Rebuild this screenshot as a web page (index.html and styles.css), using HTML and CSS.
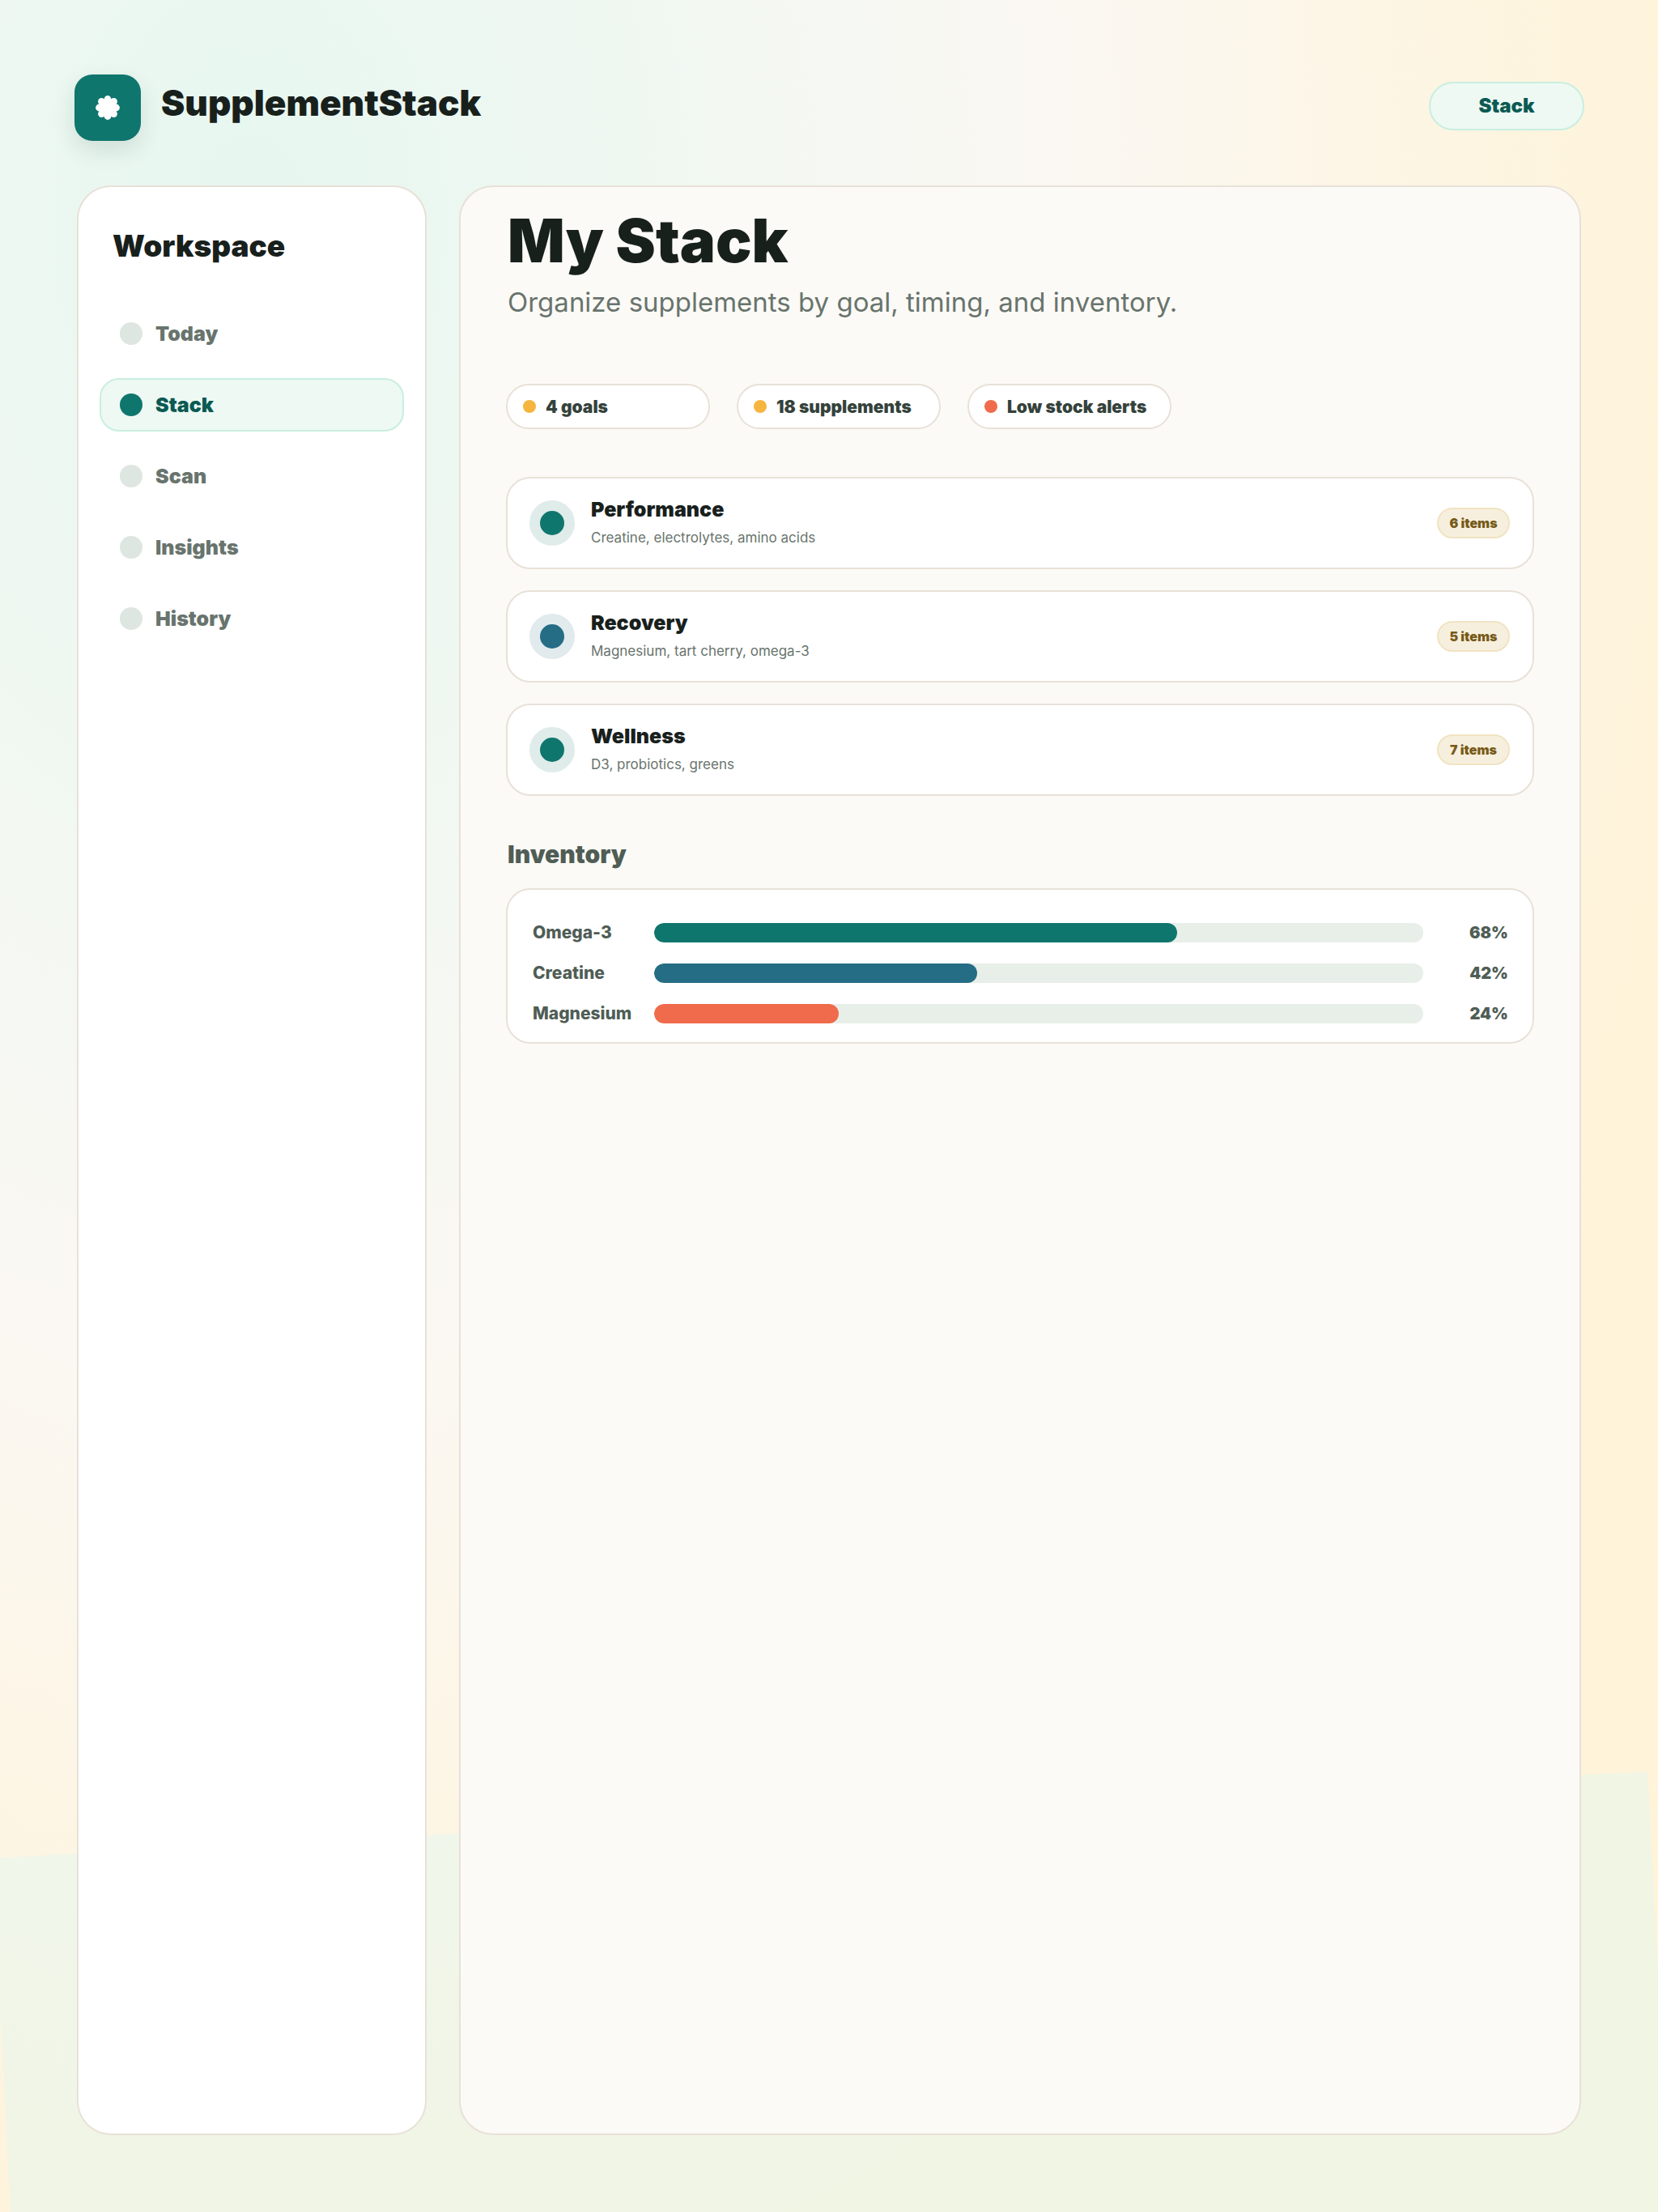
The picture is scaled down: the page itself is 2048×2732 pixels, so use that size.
FILE: index.html
```html
<!DOCTYPE html>
<html lang="en">
<head>
<meta charset="utf-8">
<meta name="viewport" content="width=device-width, initial-scale=1">
<title>SupplementStack – My Stack</title>
<link rel="stylesheet" href="styles.css">
</head>
<body>
<div class="app">
  <header class="topbar">
    <span class="logo">
      <svg viewBox="0 0 32 32" width="32" height="32" fill="#fff" aria-hidden="true">
        <circle cx="16" cy="16" r="11.5"/>
        <circle cx="16" cy="5.5" r="4.4"/><circle cx="16" cy="26.5" r="4.4"/>
        <circle cx="5.5" cy="16" r="4.4"/><circle cx="26.5" cy="16" r="4.4"/>
        <circle cx="8.4" cy="8.4" r="4.3"/><circle cx="23.6" cy="8.4" r="4.3"/>
        <circle cx="8.4" cy="23.6" r="4.3"/><circle cx="23.6" cy="23.6" r="4.3"/>
      </svg>
    </span>
    <span class="brand">SupplementStack</span>
    <button class="section-pill" type="button">Stack</button>
  </header>
  <div class="columns">
    <aside class="sidebar">
      <h2 class="sidebar-title">Workspace</h2>
      <nav class="nav">
        <a class="nav-item" href="#today"><span class="nav-dot"></span>Today</a>
        <a class="nav-item active" href="#stack" aria-current="page"><span class="nav-dot"></span>Stack</a>
        <a class="nav-item" href="#scan"><span class="nav-dot"></span>Scan</a>
        <a class="nav-item" href="#insights"><span class="nav-dot"></span>Insights</a>
        <a class="nav-item" href="#history"><span class="nav-dot"></span>History</a>
      </nav>
    </aside>
    <main class="content">
      <h1 class="title">My Stack</h1>
      <p class="subtitle">Organize supplements by goal, timing, and inventory.</p>
      <ul class="chips">
        <li class="chip"><span class="chip-dot"></span>4 goals</li>
        <li class="chip"><span class="chip-dot"></span>18 supplements</li>
        <li class="chip"><span class="chip-dot alert"></span>Low stock alerts</li>
      </ul>
      <ul class="goals">
        <li class="card goal">
          <span class="goal-icon teal"></span>
          <div class="goal-text"><h3 class="goal-name">Performance</h3><p class="goal-items">Creatine, electrolytes, amino acids</p></div>
          <span class="badge">6 items</span>
        </li>
        <li class="card goal">
          <span class="goal-icon blue"></span>
          <div class="goal-text"><h3 class="goal-name">Recovery</h3><p class="goal-items">Magnesium, tart cherry, omega-3</p></div>
          <span class="badge">5 items</span>
        </li>
        <li class="card goal">
          <span class="goal-icon teal"></span>
          <div class="goal-text"><h3 class="goal-name">Wellness</h3><p class="goal-items">D3, probiotics, greens</p></div>
          <span class="badge">7 items</span>
        </li>
      </ul>
      <h2 class="inventory-title">Inventory</h2>
      <ul class="card inventory">
        <li class="stock"><span class="stock-name">Omega-3</span><span class="track"><span class="fill teal" style="width:68%"></span></span><span class="percent">68%</span></li>
        <li class="stock"><span class="stock-name">Creatine</span><span class="track"><span class="fill blue" style="width:42%"></span></span><span class="percent">42%</span></li>
        <li class="stock"><span class="stock-name">Magnesium</span><span class="track"><span class="fill coral" style="width:24%"></span></span><span class="percent">24%</span></li>
      </ul>
    </main>
  </div>
</div>
</body>
</html>
```
FILE: styles.css
```css
:root {
  --ink: #18201c;
  --muted: #68746d;
  --slate: #4f5d55;
  --line: #e8e1d8;
  --teal: #0f766e;
  --teal-dark: #0b5a53;
  --blue: #256d85;
  --coral: #ef6b4c;
  --amber: #f5b53f;
  --mint: #eef9f4;
  --mint-line: #c9eee0;
}

* { box-sizing: border-box; }

body, h1, h2, h3, p, ul { margin: 0; padding: 0; }
ul { list-style: none; }

body {
  font-family: Inter, "Liberation Sans", sans-serif;
  color: var(--ink);
}

.app {
  position: relative;
  z-index: 0;
  overflow: hidden;
  min-height: 100vh;
  display: flex;
  flex-direction: column;
  padding: 92px 95px 95px;
  background: radial-gradient(ellipse farthest-corner at 15% 10%, #e6f7f0 0%, #fbf8f3 41%, #fdf5e2 60%, #fff3d9 76%);
}

/* Tilted mint band behind the lower part of the page */
.app::before {
  content: "";
  position: absolute;
  z-index: -1;
  left: -10px;
  top: 84%;
  width: 100%;
  height: 30%;
  background: rgba(219, 247, 245, 0.4);
  transform: rotate(-3deg);
  transform-origin: 0 0;
}

.topbar {
  display: flex;
  align-items: center;
  height: 82px;
  margin: 0 -4px 55px -3px;
}

.logo {
  display: grid;
  place-items: center;
  width: 82px;
  height: 82px;
  border-radius: 22px;
  background: var(--teal);
  box-shadow: 0 12px 28px rgba(24, 60, 40, 0.12);
}

.brand {
  margin-left: 25px;
  padding-bottom: 12px;
  font-size: 44px;
  line-height: 52px;
  font-weight: 900;
}

.section-pill {
  margin: 0 0 4px auto;
  width: 192px;
  height: 60px;
  border: 2px solid var(--mint-line);
  border-radius: 30px;
  background: var(--mint);
  color: var(--teal-dark);
  font: 900 24px/30px Inter, sans-serif;
}

.columns {
  flex: 1;
  display: grid;
  grid-template-columns: 432px 1fr;
  gap: 40px;
}

.sidebar, .content {
  border: 2px solid var(--line);
  border-radius: 42px;
}

.sidebar { background: #fff; padding: 49px 26px; }

.sidebar-title {
  padding-left: 16px;
  margin-bottom: 51px;
  font-size: 37px;
  line-height: 48px;
  font-weight: 900;
}

.nav { display: flex; flex-direction: column; gap: 22px; }

.nav-item {
  display: flex;
  align-items: center;
  gap: 16px;
  height: 66px;
  padding: 0 23px;
  border: 2px solid transparent;
  border-radius: 24px;
  color: var(--muted);
  font-size: 25px;
  line-height: 32px;
  font-weight: 900;
  text-decoration: none;
}

.nav-dot { width: 28px; height: 28px; border-radius: 50%; background: #dee6e1; }
.nav-item.active { background: var(--mint); border-color: var(--mint-line); color: var(--teal-dark); }
.active .nav-dot { background: var(--teal); }

.content { background: #fcfaf6; padding: 20px 56px; }

.title, .subtitle, .inventory-title { padding-left: 2px; }

.title { margin-bottom: 8px; font-size: 74px; line-height: 92px; font-weight: 900; }

.subtitle {
  margin-bottom: 79px;
  color: var(--muted);
  font-size: 33px;
  line-height: 44px;
}

.chips { display: flex; gap: 33px; margin-bottom: 59px; }

.chip {
  display: flex;
  align-items: center;
  gap: 12px;
  width: 252px;
  height: 56px;
  padding-left: 19px;
  border: 2px solid var(--line);
  border-radius: 28px;
  background: #fff;
  color: #34423b;
  font-size: 21px;
  font-weight: 900;
  white-space: nowrap;
}

.chip-dot { width: 16px; height: 16px; border-radius: 50%; background: var(--amber); }
.chip-dot.alert { background: var(--coral); }

.card { border: 2px solid var(--line); border-radius: 30px; background: #fff; }

.goals { display: grid; gap: 26px; margin-bottom: 53px; }

.goal { display: flex; align-items: center; gap: 20px; height: 114px; padding: 0 28px 0 27px; }

.goal-icon {
  width: 56px;
  height: 56px;
  border: 13px solid #dfecea;
  border-radius: 50%;
}
.goal-icon.blue { border-color: #e1eaed; }

.teal { background: var(--teal); }
.blue { background: var(--blue); }
.coral { background: var(--coral); }

.goal-text { flex: 1; padding-bottom: 2px; }
.goal-name { margin-bottom: 2px; font-size: 25px; line-height: 36px; font-weight: 900; }
.goal-items { color: var(--muted); font-size: 17px; line-height: 30px; }

.badge {
  display: grid;
  place-items: center;
  width: 90px;
  height: 38px;
  border: 2px solid #f1e3c2;
  border-radius: 19px;
  background: #f7efde;
  color: #765a18;
  font-size: 16px;
  font-weight: 900;
}

.inventory-title {
  margin-bottom: 23px;
  color: var(--slate);
  font-size: 30px;
  line-height: 38px;
  font-weight: 900;
}

.inventory {
  display: grid;
  gap: 20px;
  padding: 38px 30px 20px 31px;
  color: var(--slate);
  font-size: 21px;
  font-weight: 800;
}

.stock {
  display: grid;
  grid-template-columns: 130px 1fr 85px;
  gap: 20px;
  align-items: center;
  height: 30px;
}

.stock-name { padding-bottom: 2px; }
.track { height: 24px; border-radius: 12px; background: #e8eee8; overflow: hidden; }
.fill { display: block; height: 24px; border-radius: 12px; }
.percent { font-size: 20px; font-weight: 900; text-align: right; }
```
